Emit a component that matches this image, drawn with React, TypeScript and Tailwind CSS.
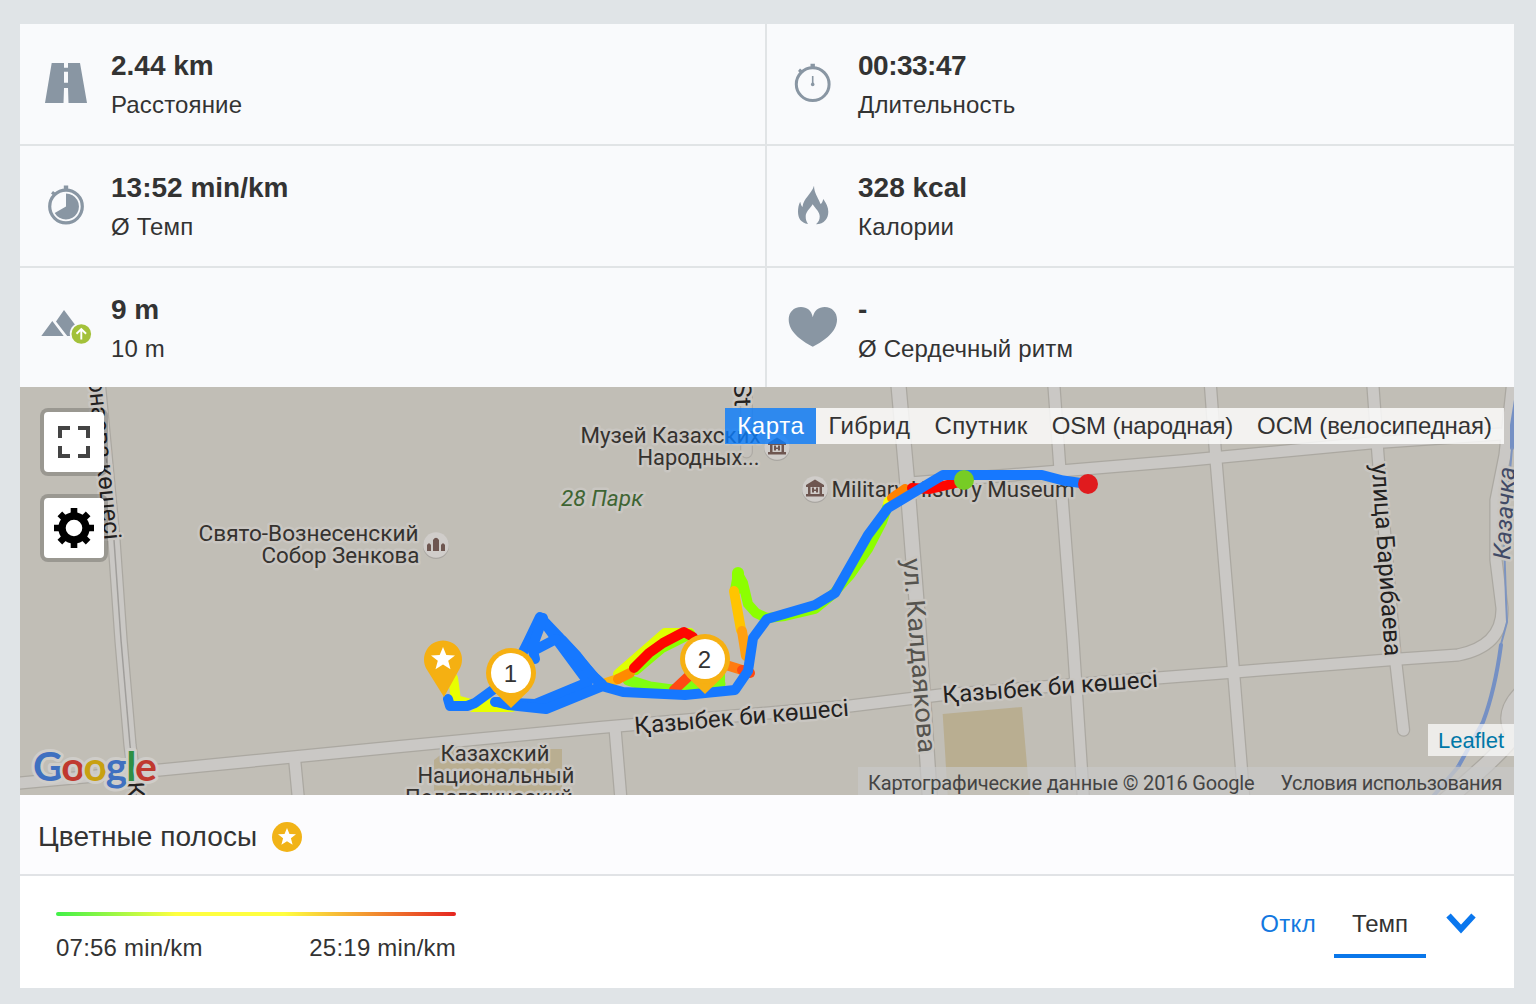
import type { ReactNode } from "react";

type Stat = { value: string; label: string; icon: ReactNode; className?: string };

const GREY = "#8996a3";

const RoadIcon = () => (
  <svg viewBox="0 0 60 60" className="w-[60px] h-[60px]">
    <path
      fill={GREY}
      fillRule="evenodd"
      d="M15.7 9H28v4.7h4V9h12l7 40H32.5l-.5-15h-4l-.5 15H9zM28 17.7v11h4v-11z"
    />
  </svg>
);

const DurationIcon = () => (
  <svg viewBox="0 0 60 60" className="w-[60px] h-[60px]">
    <circle cx="29.7" cy="30.2" r="16.4" fill="none" stroke={GREY} strokeWidth="3" />
    <path fill={GREY} d="M27.5 9.7h4.4v4.4h-4.4zM15 17l2-2.4 3.4 2.6-2.3 2.6z" />
    <path d="M29.7 22v8" stroke={GREY} strokeWidth="1.6" />
    <circle cx="29.7" cy="30.4" r="1.8" fill={GREY} />
  </svg>
);

const PaceIcon = () => (
  <svg viewBox="0 0 60 60" className="w-[60px] h-[60px]">
    <circle cx="30" cy="30.5" r="16.3" fill="none" stroke={GREY} strokeWidth="3.2" />
    <path fill={GREY} d="M27.8 9.5h4.4V14h-4.4zM15 17.5l2-2.4 3.6 2.6-2.3 2.6z" />
    <path fill={GREY} d="M30 30.5v-13a13 13 0 1 1-11.3 19.5z" />
  </svg>
);

const FlameIcon = () => (
  <svg viewBox="0 0 60 60" className="w-[60px] h-[60px]">
    <path
      fill={GREY}
      d="M31 9.7c.3 7.5 3.6 11 5.8 16.6c.3 1.2 .6 1.6 1.2 1.5c1-.9 1.7-2.6 2.3-4.8c3 4.5 5 8.2 5 12.7c0 6.5-3.8 12.2-12.3 12.6c2.5-2 3.8-4.8 3.7-8c-.1-4.5-4-7.3-7-12c-3 4.7-6.9 7.5-7 12c-.1 3.2 .8 5.5 2.3 7.6C18 47 15 42 15 35.7c0-3.500 .6-7 2.2-10c.6 2 1 4 2.3 5.2C20.500 22 28.500 18 31 9.7z"
    />
  </svg>
);

const ElevationIcon = () => (
  <svg viewBox="0 0 60 60" className="w-[60px] h-[60px]">
    <path fill={GREY} d="M5.3 38l11-15 11.4 15zM28 12l-8 11.6L31.2 38H46V36z" />
    <circle cx="45.3" cy="36" r="11.5" fill="#f9fafc" />
    <circle cx="45.3" cy="36" r="9.8" fill="#a3c13a" />
    <path d="M45.3 41.5v-10M40.5 35.8l4.8-4.7 4.8 4.7" fill="none" stroke="#fff" strokeWidth="1.9" />
  </svg>
);

const HeartIcon = () => (
  <svg viewBox="0 0 60 60" className="w-[60px] h-[60px]">
    <path
      fill={GREY}
      d="M29.8 19.3C28.5 12.5 24 9 18 9C10.5 9 5.7 14.5 5.7 21.5c0 12 12 21 24.1 27.2C42 42.5 54 33.5 54 21.5C54 14.5 49.2 9 41.7 9c-6 0-10.6 3.5-11.9 10.3z"
    />
  </svg>
);

const stats: Stat[] = [
  { value: "2.44 km", label: "Расстояние", icon: <RoadIcon /> },
  { value: "00:33:47", label: "Длительность", icon: <DurationIcon />, className: "tracking-[-0.5px]" },
  { value: "13:52 min/km", label: "Ø Темп", icon: <PaceIcon /> },
  { value: "328 kcal", label: "Калории", icon: <FlameIcon /> },
  { value: "9 m", label: "10 m", icon: <ElevationIcon /> },
  { value: "-", label: "Ø Сердечный ритм", icon: <HeartIcon /> },
];

const layers = [
  { name: "Карта", className: "bg-[#097cfc]/80 text-white tracking-[0.6px]" },
  { name: "Гибрид", className: "bg-white/80 tracking-[0.4px]" },
  { name: "Спутник", className: "bg-white/80 tracking-[0.4px]" },
  { name: "OSM (народная)", className: "bg-white/80 tracking-[-0.17px]" },
  { name: "ОСМ (велосипедная)", className: "bg-white/80 tracking-[-0.05px]" },
];

const roads = [
  { d: "M99 380L114 540L121 640L130 745L137 800", w: 11 },
  { d: "M10 784L160 770L400 746.5L600 727.5L780 712L850 706L940 695L1170 677L1235 672L1400 659L1458 655Q1503 646 1502 608L1496 560V500L1505 455L1513 380", w: 11 },
  { d: "M898 380L907 480L918 620L930 800", w: 14 },
  { d: "M1053.5 380L1060 470L1073 640L1083.5 800", w: 11 },
  { d: "M1210 380L1216 460L1231 640L1244 800", w: 11 },
  { d: "M1372.5 380L1378 455L1395 655L1403.5 730", w: 11 },
  { d: "M910 483L1060 471L1180 461L1370 443L1500 434", w: 11 },
  { d: "M615 728L621 800", w: 11 },
  { d: "M294.5 758L298.5 800", w: 11 },
  { d: "M1525 690Q1500 712 1514 735Q1500 755 1440 805", w: 15 },
];

type LabelProps = {
  x: number;
  y: number;
  width: number;
  children: string;
  size?: number;
  angle?: number;
  fill?: string;
  italic?: boolean;
};

function MapLabel({ x, y, width, children, size = 22, angle = 0, fill = "#35322f", italic }: LabelProps) {
  return (
    <text
      transform={`translate(${x} ${y}) rotate(${angle})`}
      textLength={width}
      lengthAdjust="spacingAndGlyphs"
      fontSize={size}
      fill={fill}
      fontStyle={italic ? "italic" : "normal"}
      stroke="#c9c6c1"
      strokeWidth="5"
      strokeLinejoin="round"
      paintOrder="stroke"
    >
      {children}
    </text>
  );
}

function Museum({ x, y }: { x: number; y: number }) {
  return (
    <g transform={`translate(${x} ${y})`}>
      <circle cy="1" r="13" fill="#a9a6a1" />
      <circle r="12.8" fill="#d0cdca" />
      <path
        fill="#6e5650"
        d="M0-9.5L9-4v2H7v7h2v2.500H-9V5h2v-7h-2v-2zM-4.500-2v7h9v-7z"
        fillRule="evenodd"
      />
      <path fill="#6e5650" d="M-3-1.500h2V.5H1v-2h2v5H1v-1.500h-2v1.500h-2z" />
    </g>
  );
}

const star = "M0-12L3.3-4L12-3.6L5.2 1.8L7.5 10.2L0 5.5L-7.5 10.2L-5.2 1.8L-12-3.6L-3.3-4Z";

function KmMarker({ x, y, n }: { x: number; y: number; n: number }) {
  return (
    <g transform={`translate(${x} ${y})`}>
      <path d="M0 35L-18 17.5H18z" fill="#f6b012" />
      <circle r="25" fill="#f6b012" />
      <circle r="20" fill="#fff" />
      <text x="-0.5" y="9" textAnchor="middle" fontSize="24" fill="#333" fontFamily="Liberation Sans, sans-serif">
        {n}
      </text>
    </g>
  );
}

function RouteMap() {
  return (
    <svg
      viewBox="20 387 1494 408"
      className="block w-[1494px] h-[408px] bg-[#c1beb6]"
      fontFamily="Roboto, sans-serif"
    >
      {/* blocks */}
      <path d="M942.7 714L1022 707L1030 800H948z" fill="#b9ae91" />
      <path d="M434 760L448 749H562V800H434z" fill="#b9ae91" />

      {/* streets */}
      <g fill="none" strokeLinejoin="round" strokeLinecap="round">
        <path d="M746.5 380V452" stroke="#aeaba5" strokeWidth="13" />
        <path d="M746.5 380V452" stroke="#c4c1bb" strokeWidth="10.5" />
        {roads.map((r) => (
          <path key={r.d} d={r.d} stroke="#aba8a1" strokeWidth={r.w + 2.5} />
        ))}
        {roads.map((r) => (
          <path key={r.d} d={r.d} stroke="#cac8c5" strokeWidth={r.w} />
        ))}
        <path d={roads[0].d} stroke="#a09e9b" strokeWidth="1.5" />
        <path d="M1516 400L1512 425V448" stroke="#7590c4" strokeWidth="4" />
        <path d="M1512 448L1504 540L1506 600L1507 622L1500 648" stroke="#7d94c0" strokeWidth="2" />
        <path d="M1501 645Q1495 690 1483 722L1458 767" stroke="#7590c4" strokeWidth="4" />
        <path d="M1458 767L1430 800" stroke="#8a9dc4" strokeWidth="4" />
      </g>

      {/* places */}
      <MapLabel x={198.5} y={541} width={220}>Свято-Вознесенский</MapLabel>
      <MapLabel x={261.5} y={563} width={158}>Собор Зенкова</MapLabel>
      <MapLabel x={580.5} y={443} width={180}>Музей Казахских</MapLabel>
      <MapLabel x={637.5} y={465} width={122}>Народных...</MapLabel>
      <MapLabel x={561} y={505.5} width={82} italic fill="#3f6533">28 Парк</MapLabel>
      <MapLabel x={831.5} y={497} width={243}>Military History Museum</MapLabel>
      <MapLabel x={440.5} y={761} width={109}>Казахский</MapLabel>
      <MapLabel x={417.5} y={783} width={157}>Национальный</MapLabel>
      <MapLabel x={405} y={805} width={168}>Педагогический</MapLabel>

      {/* street names */}
      <MapLabel x={88.5} y={380} width={161} size={24} angle={84.3} fill="#23211f">онаева көшесі</MapLabel>
      <MapLabel x={127} y={782} width={16} size={24} angle={87} fill="#23211f">К</MapLabel>
      <MapLabel x={734} y={382} width={25} size={24} angle={88} fill="#23211f">St</MapLabel>
      <MapLabel x={903} y={559} width={195} size={26} angle={85.4} fill="#55534e">ул. Калдаякова</MapLabel>
      <MapLabel x={1371.5} y={464} width={193} size={25} angle={86} fill="#23211f">улица Барибаева</MapLabel>
      <MapLabel x={1510} y={560} width={93} size={24} angle={-87} fill="#414a66" italic>Казачка</MapLabel>
      <MapLabel x={635} y={734} width={215} size={24} angle={-4.9} fill="#23211f">Қазыбек би көшесі</MapLabel>
      <MapLabel x={943} y={703} width={216} size={24} angle={-4.3} fill="#23211f">Қазыбек би көшесі</MapLabel>

      <Museum x={777} y={447} />
      <Museum x={815} y={489} />
      <circle cx="436" cy="546" r="13" fill="#a9a6a1" />
      <circle cx="436" cy="545" r="12.8" fill="#d0cdca" />
      <path
        fill="#6e5650"
        d="M427 551v-6q2-3.500 4 0v6zM433 551v-11q3-4.500 6 0v11zM441 551v-6q2-3.500 4 0v6z"
      />

      {/* pace coloured track */}
      <g fill="none" strokeWidth="10" strokeLinejoin="round" strokeLinecap="round">
        <path d="M453 678L456 700L483 707L512 707" stroke="#e8ff00" />
        <path d="M470 712L490 698L512 712z" fill="#e8ff00" stroke="none" />
        <path d="M560 701L596 690" stroke="#e8ff00" strokeWidth="7" />
        <path d="M618 674L665 633L690 633" stroke="#dfff00" />
        <path d="M636 670L662 648L690 634" stroke="#8cff00" />
        <path d="M628 680L650 687L672 690L705 684L720 684" stroke="#80ff10" strokeWidth="11" />
        <path d="M680 689L706 676L725 672V690z" fill="#80ff10" stroke="none" />
        <path d="M606 683L618 679" stroke="#ffb30f" />
        <path d="M618 679L630 673" stroke="#ff8a00" />
        <path d="M634 668L649 653L663 643L684 632L693 637" stroke="#ff0500" />
        <path d="M674 690L690 675" stroke="#ff4a12" />
        <path d="M726 665L742 670" stroke="#ff7b12" />
        <path d="M742 670L750 673" stroke="#ff4a12" />
        <path d="M735 590L738 574L743 583L748 604L756 613L767 618L785 616L815 609L832 595L850 575L868 549L882 522L888 505" stroke="#8cff00" />
        <path d="M738 573V588" stroke="#8cff00" strokeWidth="12" />
        <path d="M734 591L741 630" stroke="#ffc400" />
        <path d="M742 631L746 656" stroke="#ffa010" />
        <path d="M888 503L889 501" stroke="#f2ff00" />
        <path d="M892 498L905 489" stroke="#ff8200" />
        <path d="M912 488L930 489L960 482" stroke="#ff0500" />
      </g>

      {/* recorded track */}
      <g fill="none" stroke="#1678ff" strokeWidth="10" strokeLinejoin="round" strokeLinecap="round">
        <path d="M1088 484L1063 480.5L1042 475H943L888 508L868 535L835 593L815 605L767 619L753 638L748 671L735 690L685 695L623 692L601.7 686L590 672L577 657L560 638L540 617L528 642L510 678L490 692L475 703L467 706H450L448 699" />
        <path d="M541 618L557 640L588 682L535 704L495 702" />
        <path d="M600 687L546 709L508 705L497 702" />
        <path d="M562 640L577 656L591 674L602 684" />
        <path d="M543 618L532 648M556 639L533 651L535 659" />
      </g>

      <circle cx="964" cy="480" r="10" fill="#77cc25" />
      <circle cx="1088" cy="484" r="10" fill="#e01b1e" />

      <g transform="translate(443 659)">
        <path d="M1 38L-16.5 10A19 19 0 1 1 16.5 10z" fill="#f5b012" />
        <path d={star} fill="#fff" />
      </g>
      <KmMarker x={511} y={673} n={1} />
      <KmMarker x={705} y={659} n={2} />

      <text
        x="33"
        y="780.5"
        textLength="124"
        fontSize="41"
        fontWeight="700"
        fontFamily="Lato, sans-serif"
        stroke="#cfcdc9"
        strokeWidth="6"
        strokeLinejoin="round"
        paintOrder="stroke"
      >
        <tspan fill="#3f70c0">G</tspan>
        <tspan fill="#c0392f">o</tspan>
        <tspan fill="#c8a010">o</tspan>
        <tspan fill="#3f70c0">g</tspan>
        <tspan fill="#2f8f43">l</tspan>
        <tspan fill="#c0392f">e</tspan>
      </text>
    </svg>
  );
}

export default function App() {
  return (
    <main className="min-h-[1004px] w-[1536px] bg-[#e0e4e7] pt-6 pl-5 text-[#333] font-['Liberation_Sans',Arial,sans-serif]">
      <div className="w-[1494px]">
        {/* Workout stats */}
        <section className="grid grid-cols-[745px_747px] grid-rows-[120px_120px_119px] gap-0.5 bg-[#e1e4e6]">
          {stats.map((s) => (
            <div key={s.label} className="flex items-start bg-[#f9fafc] pl-4">
              <div className="mt-[30px] mr-[15px] shrink-0">{s.icon}</div>
              <div className="pt-[22px]">
                <div className={`text-[28px] leading-[39px] font-bold ${s.className ?? ""}`}>{s.value}</div>
                <div className="text-2xl leading-10 tracking-[0.15px]">{s.label}</div>
              </div>
            </div>
          ))}
        </section>

        {/* Map */}
        <section className="relative h-[408px] overflow-hidden">
          <RouteMap />

          <div className="absolute left-5 top-[21px] flex flex-col gap-[18px]">
            <button className="flex h-[68px] w-[68px] items-center justify-center rounded-lg border-4 border-black/20 bg-white bg-clip-padding">
              <svg viewBox="0 0 32 32" className="w-8 h-8" fill="none" stroke="#444" strokeWidth="4">
                <path d="M2 12V2h10M20 2h10v10M30 20v10H20M12 30H2V20" />
              </svg>
            </button>
            <button className="flex h-[68px] w-[68px] items-center justify-center rounded-lg border-4 border-black/20 bg-white bg-clip-padding">
              <svg viewBox="-20 -20 40 40" className="w-10 h-10">
                <circle r="12" fill="none" stroke="#000" strokeWidth="7.4" />
                {[0, 45, 90, 135].map((a) => (
                  <path key={a} transform={`rotate(${a})`} d="M-3.3-20h6.6v8h-6.6zM-3.3 12h6.6v8h-6.6z" />
                ))}
              </svg>
            </button>
          </div>

          <div className="absolute right-2.5 top-[21px] flex h-9 text-2xl leading-9">
            {layers.map((layer) => (
              <button key={layer.name} className={`px-3 ${layer.className}`}>
                {layer.name}
              </button>
            ))}
          </div>

          <div className="absolute right-0 bottom-[39px] h-8 bg-white/70 px-2.5 text-[22px] leading-[33px] text-[#0078a8]">
            Leaflet
          </div>
          <div className="absolute right-0 bottom-0 flex h-7 w-[656px] justify-between bg-[#c8c7c7]/70 pl-2.5 pr-3 font-[Roboto,sans-serif] text-xl leading-[32px] text-[#444]">
            <span className="tracking-[-0.15px]">Картографические данные © 2016 Google</span>
            <span className="tracking-[-0.38px]">Условия использования</span>
          </div>
        </section>

        {/* Colour stripes */}
        <section className="bg-white">
          <header className="flex h-[81px] items-center gap-[15px] border-b-2 border-[#e1e3e6] bg-[#fcfcfe] pl-[18px] pt-1">
            <h2 className="text-[28px] leading-10 tracking-[0.08px]">Цветные полосы</h2>
            <svg viewBox="-15 -15 30 30" className="w-[30px] h-[30px]">
              <circle r="15" fill="#f1b317" />
              <path d={star} fill="#fff" transform="scale(.75)" />
            </svg>
          </header>

          <div className="flex h-28 justify-between pl-9">
            <div className="w-[400px] pt-9">
              <div className="h-1 rounded-full bg-[linear-gradient(90deg,#40f048_0%,#ffff40_30%,#ffff40_57%,#e52420_100%)]" />
              <div className="mt-3 flex justify-between text-2xl leading-10 tracking-[0.22px]">
                <span>07:56 min/km</span>
                <span>25:19 min/km</span>
              </div>
            </div>
            <div className="flex h-[82px] items-stretch pr-[38px] text-2xl leading-8">
              <button className="px-[18px] pt-3.5 tracking-[0.35px] text-[#1278e0]">Откл</button>
              <button className="w-[92px] border-b-4 border-[#0a77ea] pt-[18px]">Темп</button>
              <svg viewBox="0 0 30 22" className="ml-5 mt-[37px] h-[22px] w-[30px]">
                <path d="M2.5 2.5L15 16L27.5 2.5" fill="none" stroke="#0a77ee" strokeWidth="6" />
              </svg>
            </div>
          </div>
        </section>
      </div>
    </main>
  );
}
